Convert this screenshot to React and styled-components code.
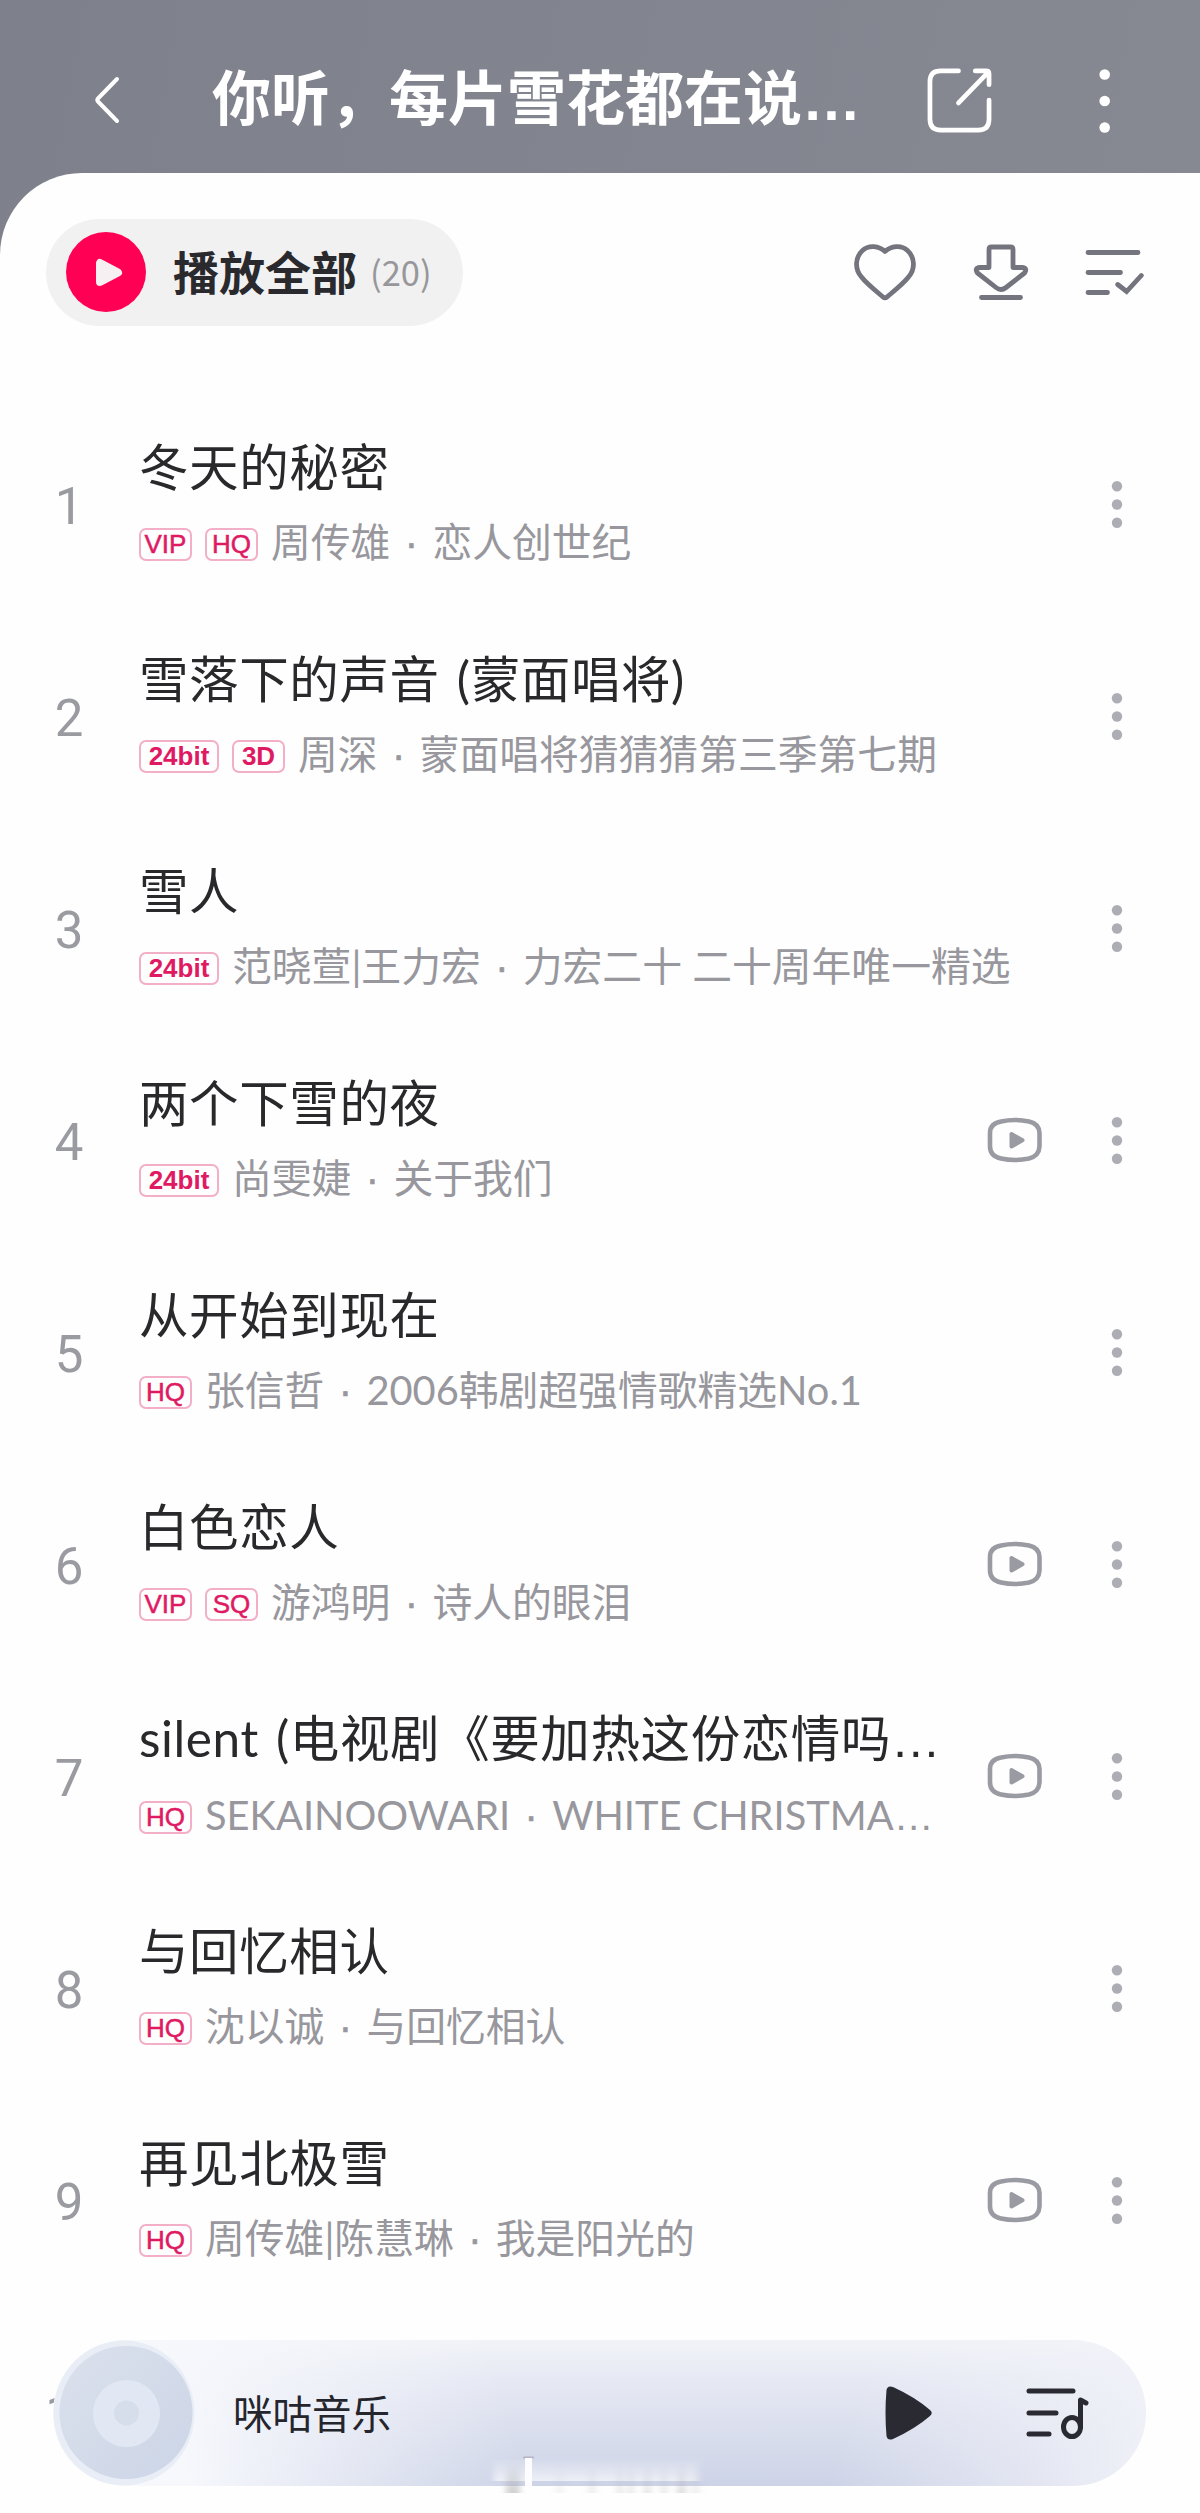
import React from "react";
import styled, { createGlobalStyle } from "styled-components";

const GlobalStyle = createGlobalStyle`
  * {
    box-sizing: border-box;
  }

  body {
    margin: 0;
    background: #fefefe;
    font-family: "Noto Sans CJK SC", "Noto Sans", sans-serif;
  }
`;

const songs = [
  { id: 1, title: "冬天的秘密", tags: ["VIP", "HQ"], artist: "周传雄", album: "恋人创世纪" },
  { id: 2, title: "雪落下的声音 (蒙面唱将)", tags: ["24bit", "3D"], artist: "周深", album: "蒙面唱将猜猜猜第三季第七期" },
  { id: 3, title: "雪人", tags: ["24bit"], artist: "范晓萱|王力宏", album: "力宏二十 二十周年唯一精选" },
  { id: 4, title: "两个下雪的夜", tags: ["24bit"], artist: "尚雯婕", album: "关于我们", video: true },
  { id: 5, title: "从开始到现在", tags: ["HQ"], artist: "张信哲", album: "2006韩剧超强情歌精选No.1" },
  { id: 6, title: "白色恋人", tags: ["VIP", "SQ"], artist: "游鸿明", album: "诗人的眼泪", video: true },
  { id: 7, title: "silent (电视剧《要加热这份恋情吗", tags: ["HQ"], artist: "SEKAINOOWARI", album: "WHITE CHRISTMA", video: true, cut: true },
  { id: 8, title: "与回忆相认", tags: ["HQ"], artist: "沈以诚", album: "与回忆相认" },
  { id: 9, title: "再见北极雪", tags: ["HQ"], artist: "周传雄|陈慧琳", album: "我是阳光的", video: true },
];

const Page = styled.div`
  position: relative;
  display: flex;
  flex-direction: column;
  width: 1200px;
  height: 2513px;
  overflow: hidden;
  background: linear-gradient(100deg, #7e808b 0, #868892 1200px);
`;

const Header = styled.header`
  display: flex;
  flex-shrink: 0;
  align-items: center;
  height: 173px;
  padding: 27px 89px 0 89px;

  svg {
    flex-shrink: 0;
  }
`;

const Heading = styled.h1`
  flex: 1;
  margin: 0 0 5px 87px;
  font-size: 59px;
  line-height: 80px;
  font-weight: 700;
  color: #fff;
  white-space: nowrap;
`;

// latin ellipsis sits on the baseline
const Dots = styled.span`
  font-family: "Liberation Sans", sans-serif;
`;

const MidDot = styled.span`
  display: inline-block;
  width: 42px;
  text-align: center;
  font-family: "Liberation Sans", sans-serif;
  -webkit-text-stroke: 0.6px #97979d;
`;

const Sheet = styled.main`
  flex: 1;
  min-height: 0;
  background: #fefefe;
  border-top-left-radius: 82px;
`;

const Toolbar = styled.div`
  display: flex;
  align-items: center;
  height: 107px;
  margin-top: 46px;
  padding: 0 56px 0 46px;
`;

const PlayAll = styled.button`
  display: flex;
  align-items: center;
  width: 417px;
  height: 107px;
  margin-right: auto;
  padding: 0 0 0 20px;
  border: 0;
  border-radius: 54px;
  background: #f1f1f1;
  font-family: inherit;
  color: #29292e;
  white-space: nowrap;

  svg {
    margin-bottom: 1px;
  }
`;

const PlayAllText = styled.span`
  margin: 0 13px 5px 27px;
  font-size: 46px;
  font-weight: 700;
`;

const Count = styled.span`
  margin-bottom: 4px;
  font-size: 34.5px;
  color: #97979b;
`;

const Tools = styled.div`
  display: flex;
  align-items: center;
  gap: 53px;
`;

const List = styled.ul`
  margin: 73px 0 0;
  padding: 0;
  list-style: none;
`;

const Row = styled.li`
  display: flex;
  align-items: center;
  height: 212px;
  padding-right: 77px;
`;

const Index = styled.span`
  width: 138px;
  padding-top: 3px;
  text-align: center;
  font-family: Roboto, sans-serif;
  font-size: 51px;
  line-height: 60px;
  letter-spacing: ${(props) => (props.$tight ? -5 : 0)}px;
  color: #9a9aa1;
`;

const Info = styled.div`
  flex: 1;
  min-width: 0;
  padding: 0 0 8px 1px;
  font-family: Lato, "Noto Sans CJK SC", sans-serif;
`;

const Title = styled.div`
  font-size: 49.5px;
  line-height: 68px;
  letter-spacing: 0.6px;
  word-spacing: 4px;
  color: #29292c;
  white-space: nowrap;
`;

const Sub = styled.div`
  display: flex;
  align-items: center;
  height: 54px;
  margin-top: 14px;
  font-size: 39.8px;
  line-height: 54px;
  color: #97979d;
  white-space: nowrap;
`;

const Tag = styled.span`
  display: flex;
  align-items: center;
  justify-content: center;
  width: ${(props) => (props.$wide ? 80 : 53)}px;
  height: 33px;
  margin: 5px 13px 0 0;
  border: 2px solid #f2afc7;
  border-radius: 7px;
  font-family: "Liberation Sans", Arial, sans-serif;
  font-size: 26px;
  font-weight: ${(props) => (props.$bold ? 700 : 400)};
  line-height: 29px;
  color: #df1a63;
  -webkit-text-stroke: ${(props) => (props.$bold ? 0 : 0.5)}px #df1a63;
`;

const Player = styled.footer`
  position: absolute;
  left: 53px;
  bottom: 27px;
  display: flex;
  align-items: center;
  width: 1093px;
  height: 146px;
  padding-right: 55px;
  border-radius: 73px;
  background:
    linear-gradient(75deg, #f6f8fc 12%, rgba(240, 243, 250, 0) 42%),
    linear-gradient(290deg, rgba(242, 243, 249, 0.85) 2%, rgba(240, 241, 248, 0) 28%),
    linear-gradient(180deg, #f2f3f8 0%, #e7eaf4 25%, #cdd3e7 100%);
`;

const Disc = styled.div`
  display: flex;
  width: 142px;
  height: 146px;
  margin-right: 38px;
`;

const Station = styled.span`
  flex: 1;
  margin-bottom: 3px;
  font-size: 39.5px;
  color: #25262d;
`;

const Watermark = styled.svg`
  position: absolute;
  left: 480px;
  bottom: 8px;
`;

const smudges = [
  { x: 26, w: 14, o: 0.5 },
  { x: 76, w: 7, o: 0.14 },
  { x: 108, w: 8, o: 0.18 },
  { x: 137, w: 6, o: 0.26 },
  { x: 148, w: 6, o: 0.26 },
  { x: 164, w: 7, o: 0.28 },
  { x: 181, w: 6, o: 0.26 },
  { x: 197, w: 9, o: 0.34 },
  { x: 212, w: 7, o: 0.2 },
];

const MoreIcon = () => (
  <svg width="12" height="66" viewBox="0 0 12 66" fill="#adadb5">
    <circle cx="6" cy="14.2" r="5.2" />
    <circle cx="6" cy="32.5" r="5.2" />
    <circle cx="6" cy="50.8" r="5.2" />
  </svg>
);

const VideoIcon = () => (
  <svg width="56" height="46" viewBox="0 0 56 46" style={{ margin: "0 68px 2px 0" }}>
    <path
      d="M3 16Q3 6.500 14 4.500Q28 1.500 42 4.500Q52 6.500 52.500 16V29.500Q52 39 42 41.500Q28 44.500 14 41.500Q3 39 3 29.500Z"
      fill="none"
      stroke="#9a9aa3"
      strokeWidth="4.600"
    />
    <path d="M24.500 17v12.500l11-6.200z" fill="#9a9aa3" stroke="#9a9aa3" strokeWidth="4" strokeLinejoin="round" />
  </svg>
);

function App() {
  return (
    <>
      <GlobalStyle />
      <Page>
        <Header>
          <svg width="36" height="50" viewBox="0 0 36 50" fill="none" stroke="#fff" strokeWidth="4" strokeLinecap="round" strokeLinejoin="round">
            <path d="M28 4L9 23.500Q7.500 25 9 26.500L28 46" />
          </svg>
          <Heading>你听，每片雪花都在说<Dots>…</Dots></Heading>
          <svg width="65" height="65" viewBox="0 0 66 66" fill="none" stroke="#fff" strokeWidth="4.800" strokeLinecap="round" strokeLinejoin="round">
            <path d="M32 3H14Q3 3 3 14V52Q3 63 14 63H52Q63 63 63 52V32.500" />
            <path d="M49 3H60Q63 3 63 6V17M61.500 5L32 35.500" />
          </svg>
          <svg width="12" height="66" viewBox="0 0 12 66" fill="#fff" style={{ marginLeft: 107 }}>
            <circle cx="5.700" cy="7.500" r="5.300" />
            <circle cx="5.700" cy="34" r="5.300" />
            <circle cx="5.700" cy="60.500" r="5.300" />
          </svg>
        </Header>

        <Sheet>
          <Toolbar>
            <PlayAll>
              <svg width="80" height="80" viewBox="0 0 80 80">
                <circle cx="40" cy="40" r="40" fill="#ff0054" />
                <path d="M34 31v19l18-9.500z" fill="#f7f0f2" stroke="#f7f0f2" strokeWidth="8" strokeLinejoin="round" />
              </svg>
              <PlayAllText>播放全部</PlayAllText>
              <Count>(20)</Count>
            </PlayAll>
            <Tools>
              <svg width="66" height="62" viewBox="0 0 66 62" fill="none" stroke="#74747e" strokeWidth="4.800" strokeLinejoin="round">
                <path d="M33 9.500C27 4 17 2.500 10.500 8.500C3 15.500 2.500 27 9.500 35C15 42 24 49 31 55Q33 56.500 35 55C42 49 51 42 56.500 35C63.500 27 63 15.500 55.500 8.500C49 2.500 39 4 33 9.500Z" />
              </svg>
              <svg width="60" height="62" viewBox="0 0 60 62" fill="none" stroke="#74747e" strokeWidth="4.800" strokeLinecap="round" strokeLinejoin="round">
                <path d="M20.500 5H39.500Q42 5 42 7.500V25.500H51Q57 26 53.500 31L35 45.500Q30 49.500 25 45.500L6.500 31Q3 26 9 25.500H18V7.500Q18 5 20.500 5Z" />
                <path d="M10.500 55.500H49.500" />
              </svg>
              <svg width="60" height="50" viewBox="0 0 60 50" fill="none" stroke="#74747e" strokeWidth="4.800" strokeLinecap="round" strokeLinejoin="miter">
                <path d="M4 4.500H54M4 24.500H36.500M4 44.500H23.500M33.700 36.500L42.600 43.500L57.300 27.500" />
              </svg>
            </Tools>
          </Toolbar>

          <List>
            {songs.map((song) => (
              <Row key={song.id}>
                <Index>{song.id}</Index>
                <Info>
                  <Title>
                    {song.title}
                    {song.cut && <Dots>…</Dots>}
                  </Title>
                  <Sub>
                    {song.tags.map((tag) => (
                      <Tag key={tag} $wide={tag === "24bit"} $bold={tag === "24bit" || tag === "3D"}>
                        {tag}
                      </Tag>
                    ))}
                    <span>
                      {song.artist}
                      <MidDot>·</MidDot>
                      {song.album}
                      {song.cut && <Dots>…</Dots>}
                    </span>
                  </Sub>
                </Info>
                {song.video && <VideoIcon />}
                <MoreIcon />
              </Row>
            ))}
            <Row>
              <Index $tight>10</Index>
            </Row>
          </List>
        </Sheet>

        <Player>
          <Disc>
            <svg width="142" height="146" viewBox="0 0 142 146">
              <defs>
                <linearGradient id="disc" x1="0" y1="0" x2="1" y2="1">
                  <stop offset="0" stopColor="#dbe1ec" />
                  <stop offset="1" stopColor="#ccd5e7" />
                </linearGradient>
              </defs>
              <ellipse cx="71" cy="73" rx="70.500" ry="72.500" fill="#e8edf6" />
              <circle cx="73" cy="72.500" r="66.500" fill="url(#disc)" />
              <circle cx="73.500" cy="73.500" r="33.500" fill="#e2e8f3" />
              <circle cx="73.500" cy="73" r="12.500" fill="#d6deeb" />
            </svg>
          </Disc>
          <Station>咪咕音乐</Station>
          <svg width="50" height="56" viewBox="0 0 50 56" style={{ marginRight: 91 }}>
            <path d="M2.500 5Q3.500 0 9 2Q31 12 46 25Q49.500 28 46 31Q31 44 9 54Q3.500 56 2.500 51Q0.500 28 2.500 5Z" fill="#2a2b32" />
          </svg>
          <svg width="66" height="54" viewBox="0 0 66 54" fill="none" stroke="#2a2b32" strokeWidth="5" strokeLinecap="round" strokeLinejoin="round">
            <path d="M4 5H48M4 27H31M4 48H24" />
            <ellipse cx="47" cy="41" rx="8.500" ry="9.500" />
            <path d="M55.500 41V14L61 17" />
          </svg>
        </Player>

        <Watermark width="240" height="65" viewBox="0 0 240 65">
          <defs>
            <linearGradient id="fade" x1="0" y1="0" x2="0" y2="1">
              <stop offset="0" stopColor="#fff" stopOpacity="0" />
              <stop offset="1" stopColor="#fff" stopOpacity="0.65" />
            </linearGradient>
            <linearGradient id="smudge" x1="0" y1="0" x2="0" y2="1">
              <stop offset="0" stopColor="#a8a8ac" stopOpacity="0" />
              <stop offset="1" stopColor="#a0a0a4" />
            </linearGradient>
            <filter id="soft" x="-10%" y="-10%" width="120%" height="120%">
              <feGaussianBlur stdDeviation="3 0.600" />
            </filter>
          </defs>
          <g filter="url(#soft)">
            <rect x="14" y="18" width="205" height="23" fill="url(#fade)" />
            {smudges.map((s) => (
              <rect key={s.x} x={s.x} y="22" width={s.w} height="31" fill="url(#smudge)" opacity={s.o} />
            ))}
          </g>
          <rect x="43" y="16.500" width="11" height="2" rx="1" fill="#8f929c" opacity="0.5" />
          <rect x="45" y="18" width="7" height="32" fill="#fdfdff" />
        </Watermark>
      </Page>
    </>
  );
}

export default App;
